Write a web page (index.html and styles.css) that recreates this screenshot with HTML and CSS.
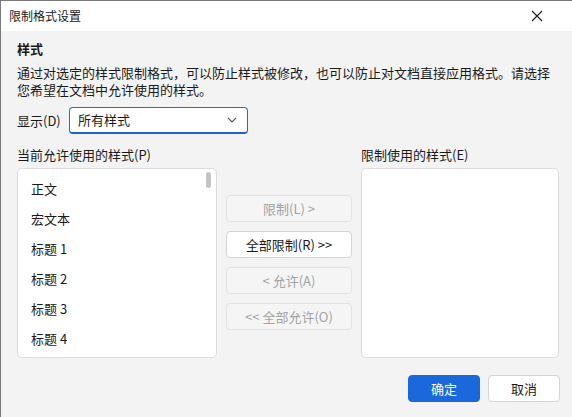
FILE: index.html
```html
<!DOCTYPE html>
<html lang="zh-CN">
<head>
    <meta charset="UTF-8">
    <meta name="viewport" content="width=device-width, initial-scale=1.0">
    <title>限制格式设置</title>
    <link rel="stylesheet" href="styles.css">
</head>
<body>
    <div class="dialog">
        <div class="titlebar">
            <span class="title">限制格式设置</span>
            <button class="close" aria-label="关闭">
                <svg width="12" height="12" viewBox="0 0 12 12"><path d="M1 1 L11 11 M11 1 L1 11" stroke="#1a1a1a" stroke-width="1.1" fill="none"/></svg>
            </button>
        </div>

        <div class="content">
            <div class="heading">样式</div>
            <p class="desc">通过对选定的样式限制格式，可以防止样式被修改，也可以防止对文档直接应用格式。请选择您希望在文档中允许使用的样式。</p>

            <div class="show-row">
                <span class="show-label">显示(D)</span>
                <div class="select">
                    <span>所有样式</span>
                    <svg width="10" height="6" viewBox="0 0 10 6"><path d="M1 1 L5 5 L9 1" stroke="#555" stroke-width="1.1" fill="none"/></svg>
                </div>
            </div>

            <div class="lists">
                <div class="list-label">当前允许使用的样式(P)</div>
                <div></div>
                <div class="list-label">限制使用的样式(E)</div>

                <div class="listbox">
                    <div class="scroll-thumb"></div>
                    <div class="item">正文</div>
                    <div class="item">宏文本</div>
                    <div class="item">标题 1</div>
                    <div class="item">标题 2</div>
                    <div class="item">标题 3</div>
                    <div class="item">标题 4</div>
                </div>

                <div class="actions">
                    <button class="btn" disabled>限制(L) &gt;</button>
                    <button class="btn">全部限制(R) &gt;&gt;</button>
                    <button class="btn" disabled>&lt; 允许(A)</button>
                    <button class="btn" disabled>&lt;&lt; 全部允许(O)</button>
                </div>

                <div class="listbox"></div>
            </div>

            <div class="footer">
                <button class="btn primary">确定</button>
                <button class="btn">取消</button>
            </div>
        </div>
    </div>
</body>
</html>
```

FILE: styles.css
```css
body {
    margin: 0;
    font-family: "Noto Sans CJK SC", "Noto Sans", sans-serif;
    font-size: 13px;
    color: #1a1a1a;
    background-color: #f3f3f3;
}
.dialog {
    width: 571px;
    height: 416px;
    border-top: 1px solid #7a7a7a;
    border-left: 1px solid #7a7a7a;
    background-color: #f3f3f3;
    overflow: hidden;
}
.titlebar {
    height: 30px;
    background-color: #fff;
    display: flex;
    align-items: center;
    justify-content: space-between;
    padding-left: 8px;
}
.title {
    font-size: 12px;
    line-height: 16px;
}
.close {
    width: 46px;
    height: 30px;
    border: none;
    background: none;
    display: flex;
    align-items: center;
    justify-content: center;
    padding: 0;
    margin-right: 12px;
}
.content {
    padding: 9px 12px 0 16px;
}
.heading {
    font-weight: bold;
    line-height: 18px;
}
.desc {
    margin: 6px 0 0;
    line-height: 17px;
}
.show-row {
    display: flex;
    align-items: center;
    margin-top: 9px;
}
.show-label {
    width: 52px;
}
.select {
    width: 159px;
    height: 24px;
    border: 1px solid #2a68d4;
    border-bottom: 2px solid #1f5fd0;
    border-radius: 4px;
    background-color: #fff;
    display: flex;
    align-items: center;
    justify-content: space-between;
    padding: 0 10px 0 8px;
    line-height: 18px;
}
.lists {
    display: grid;
    grid-template-columns: 200px 126px 198px;
    column-gap: 9px;
    margin-top: 12px;
}
.list-label {
    line-height: 18px;
    margin-bottom: 4px;
}
.listbox {
    position: relative;
    height: 183px;
    background-color: #fff;
    border: 1px solid #dcdcdc;
    border-radius: 5px;
    padding-top: 5px;
}
.item {
    height: 30px;
    line-height: 30px;
    padding-left: 13px;
}
.scroll-thumb {
    position: absolute;
    top: 3px;
    right: 5px;
    width: 5px;
    height: 16px;
    border-radius: 3px;
    background-color: #c4c4c4;
}
.actions {
    display: flex;
    flex-direction: column;
    gap: 9px;
    padding-top: 27px;
}
.btn {
    height: 27px;
    font-family: inherit;
    font-size: 13px;
    color: #1a1a1a;
    background-color: #fff;
    border: 1px solid #d4d4d4;
    border-radius: 4px;
    padding: 0;
}
.btn:disabled {
    background-color: #f5f5f5;
    border-color: #e2e2e2;
    color: #a2a2a2;
}
.footer {
    display: flex;
    justify-content: flex-end;
    gap: 8px;
    margin-top: 17px;
}
.footer .btn {
    width: 72px;
}
.primary {
    background-color: #1b68dd;
    border-color: #1b68dd;
    color: #fff;
}
```
